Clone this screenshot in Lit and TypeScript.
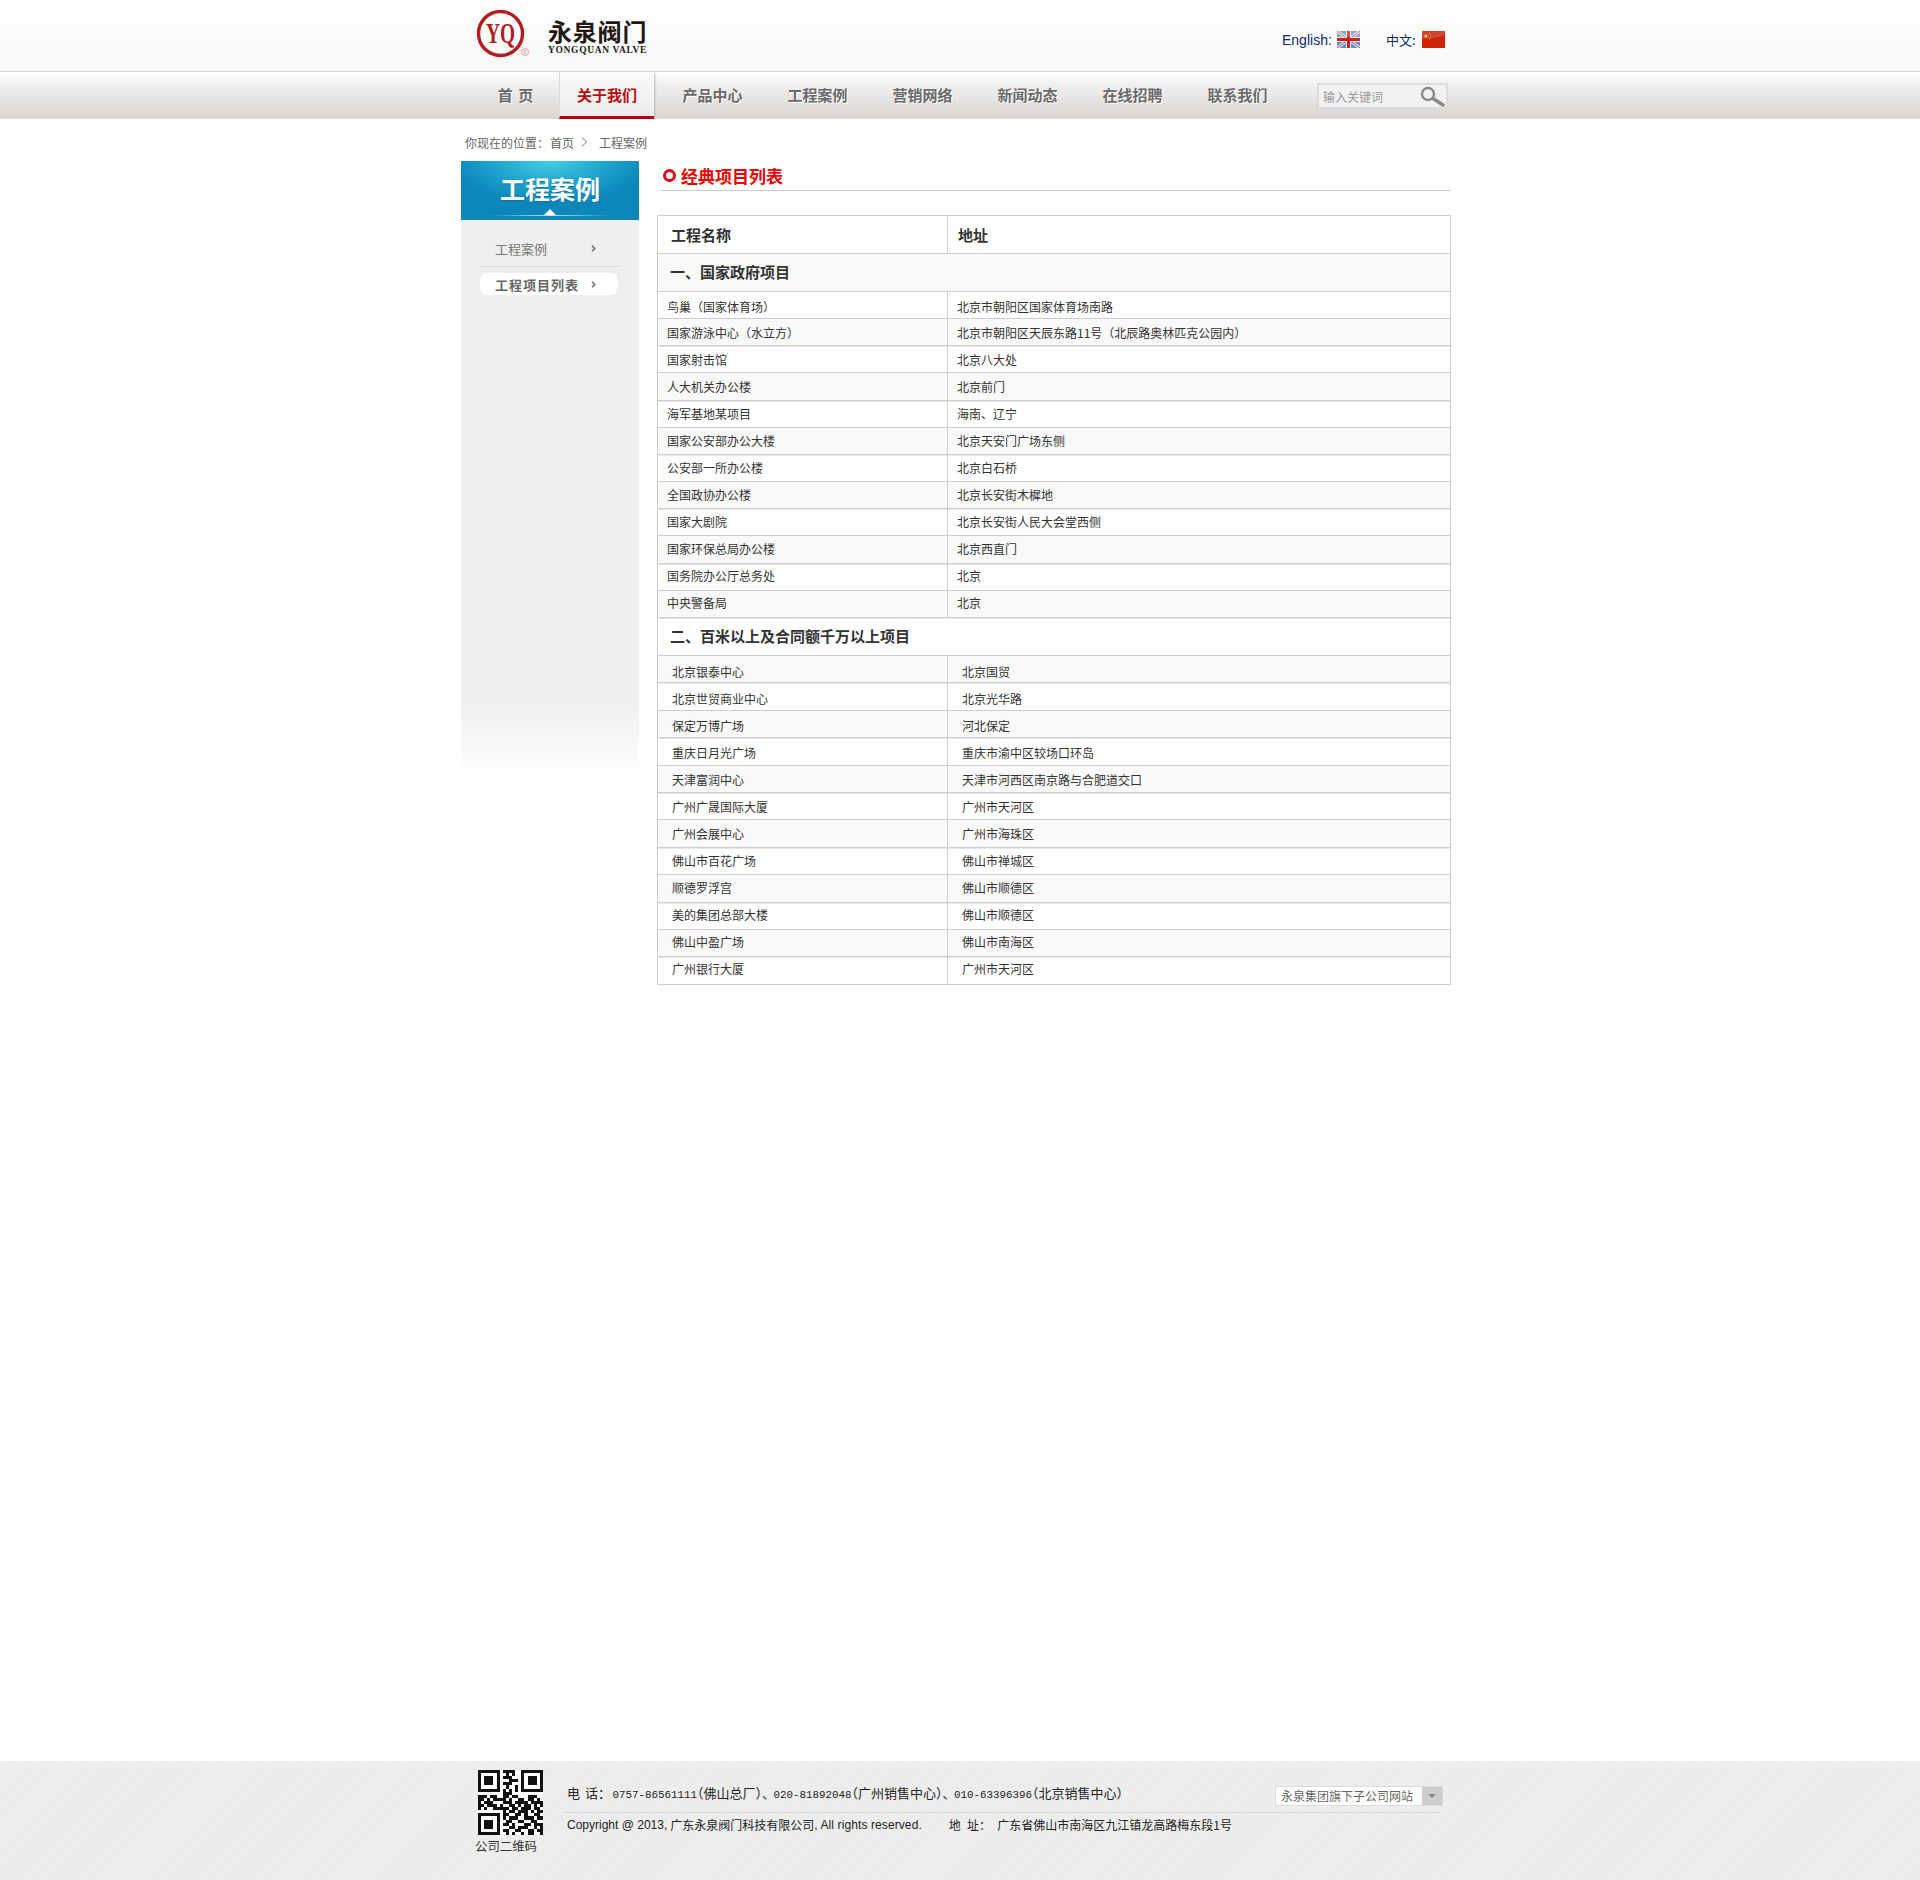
import { LitElement, html, css, svg } from "lit";
import { customElement } from "lit/decorators.js";

const S1 = [
  ["鸟巢（国家体育场）", "北京市朝阳区国家体育场南路"],
  ["国家游泳中心（水立方）", "北京市朝阳区天辰东路11号（北辰路奥林匹克公园内）"],
  ["国家射击馆", "北京八大处"],
  ["人大机关办公楼", "北京前门"],
  ["海军基地某项目", "海南、辽宁"],
  ["国家公安部办公大楼", "北京天安门广场东侧"],
  ["公安部一所办公楼", "北京白石桥"],
  ["全国政协办公楼", "北京长安街木樨地"],
  ["国家大剧院", "北京长安街人民大会堂西侧"],
  ["国家环保总局办公楼", "北京西直门"],
  ["国务院办公厅总务处", "北京"],
  ["中央警备局", "北京"],
];
const S2 = [
  ["北京银泰中心", "北京国贸"],
  ["北京世贸商业中心", "北京光华路"],
  ["保定万博广场", "河北保定"],
  ["重庆日月光广场", "重庆市渝中区较场口环岛"],
  ["天津富润中心", "天津市河西区南京路与合肥道交口"],
  ["广州广晟国际大厦", "广州市天河区"],
  ["广州会展中心", "广州市海珠区"],
  ["佛山市百花广场", "佛山市禅城区"],
  ["顺德罗浮宫", "佛山市顺德区"],
  ["美的集团总部大楼", "佛山市顺德区"],
  ["佛山中盈广场", "佛山市南海区"],
  ["广州银行大厦", "广州市天河区"],
];
const NAV = ["产品中心", "工程案例", "营销网络", "新闻动态", "在线招聘", "联系我们"];

const QR = [
  "111111101111001111111",
  "100000100101001000001",
  "101110101110001011101",
  "101110100011101011101",
  "101110101110001011101",
  "100000100100101000001",
  "111111101010101111111",
  "000000001110000000000",
  "111011001101100011100",
  "110101111010011011010",
  "101110001110111101111",
  "110111010011010110101",
  "101001111101101110110",
  "000000001011011101011",
  "111111101100110100110",
  "100000101011100111011",
  "101110100110011001100",
  "101110101101000110111",
  "101110100011011100101",
  "100000101100110011011",
  "111111100101001011001",
];

const qr = () => html`<svg class="qr" viewBox="0 0 21 21" shape-rendering="crispEdges">
  <rect width="21" height="21" fill="#fff"></rect>
  ${QR.map((r, y) => [...r].map((c, x) => c === "1" ? svg`<rect x=${x} y=${y} width="1" height="1" fill="#111"></rect>` : null))}
</svg>`;

const ukFlag = html`<svg class="flag" viewBox="0 0 23 17">
  <rect width="23" height="17" fill="#4d94dd"></rect>
  <path d="M0 0L23 17M23 0L0 17" stroke="#f3e4e4" stroke-width="3"></path>
  <path d="M0 0L23 17M23 0L0 17" stroke="#d4453f" stroke-width="1"></path>
  <path d="M11.5 0V17M0 8.5H23" stroke="#f6eeee" stroke-width="5"></path>
  <path d="M11.5 0V17M0 8.5H23" stroke="#cf1f1a" stroke-width="3"></path>
  <rect width="23" height="6" fill="#fff" opacity=".22"></rect>
</svg>`;
const cnFlag = html`<svg class="flag" viewBox="0 0 23 17">
  <rect width="23" height="17" fill="#cc2208"></rect>
  <path d="M0 0H23V4C15 7 7 8 0 8Z" fill="#fff" opacity=".16"></path>
  <circle cx="4" cy="5" r="1.6" fill="#f3d25c"></circle>
  <circle cx="7.5" cy="2.4" r=".5" fill="#f3d25c"></circle>
  <circle cx="8.6" cy="4.2" r=".5" fill="#f3d25c"></circle>
  <circle cx="8.6" cy="6.2" r=".5" fill="#f3d25c"></circle>
  <circle cx="7.5" cy="8" r=".5" fill="#f3d25c"></circle>
</svg>`;
const chevron = html`<svg class="chev" viewBox="0 0 5 7"><path d="M1 .8L3.8 3.5L1 6.2" fill="none" stroke="#666" stroke-width="1.4"></path></svg>`;

@customElement("app-root")
export class AppRoot extends LitElement {
  static styles = css`
    :host {
      display: block;
      font-family: "Noto Sans CJK SC", "Liberation Sans", sans-serif;
      font-size: 12px;
      color: #333;
      background: #fff;
    }
    * { box-sizing: border-box; }
    .page { display: flex; flex-direction: column; min-height: 1880px; }
    .wrap { width: 990px; margin: 0 0 0 461px; }

    .top { height: 72px; background: linear-gradient(#fff, #f8f8f8); border-bottom: 1px solid #d2d2d2; }
    .top .wrap { display: flex; height: 71px; align-items: flex-start; padding: 0 6px 0 15px; }
    .logo { width: 54px; height: 50px; margin-top: 9px; flex: none; }
    .brand { margin: 19px 0 0 18px; display: flex; flex-direction: column; width: 100px; color: #231815; }
    .brand b { font-size: 24px; line-height: 24px; letter-spacing: .8px; white-space: nowrap; }
    .brand span { font-family: "Liberation Serif", serif; font-weight: 700; font-size: 9.5px; line-height: 10px; letter-spacing: .66px; white-space: nowrap; margin-top: 2px; }
    .lang { margin: 31px 0 0 auto; display: flex; align-items: center; height: 17px; color: #0b2c5e; }
    .lang .en { font-family: "Liberation Sans", sans-serif; font-size: 14px; width: 55px; white-space: nowrap; }
    .lang .zh { font-size: 13px; width: 36px; margin-left: 26px; white-space: nowrap; }
    .flag { width: 23px; height: 17px; display: block; }

    .nav { height: 47px; background: linear-gradient(#fefefe, #f0efee 30%, #d8d5d2); }
    .nav .wrap { display: flex; height: 47px; align-items: stretch; padding-right: 3px; }
    .item {
      width: 105px; display: flex; align-items: center; justify-content: center;
      font-size: 15px; font-weight: 700; color: #6a6a6a; text-shadow: 1px 1px 0 #fff; white-space: nowrap; padding-bottom: 3px;
    }
    .item.first { width: 94px; padding-left: 15px; word-spacing: 2px; }
    .item.active {
      width: 95px; margin: 0 6px 0 4px; color: #b80d12; text-shadow: none;
      background: linear-gradient(#fbfbfb, #ececeb);
      border-bottom: 3px solid #b8000f; border-left: 1px solid #dcdcdc; padding-bottom: 0;
      box-shadow: 2px 0 2px -1px #bbb;
    }
    .search {
      margin: 11px 0 10px auto; width: 131px; height: 26px; border: 2px solid #dedcda; background: #f2f2f2;
      display: flex; align-items: center; justify-content: space-between; padding: 0 1px 0 4px; color: #999; font-size: 12px;
    }
    .search svg { width: 26px; height: 21px; display: block; }

    .crumb { height: 42px; display: flex; align-items: center; padding: 10px 0 6px 4px; color: #666; white-space: nowrap; }
    .crumb .sep { width: 7px; height: 10px; margin: 0 11px 0 7px; display: block; }
    .crumb .home { margin-left: 1px; }

    .body { display: grid; grid-template-columns: 178px 794px; column-gap: 18px; align-items: start; }

    .side { min-height: 619px; background: linear-gradient(#efefef 0, #efefef 86.5%, #fff 100%); }
    .side-head {
      position: relative; height: 59px;
      background: radial-gradient(ellipse 55% 70% at 50% 0, #44cde3 0, #1fa6cf 55%, #0d87bb 100%);
      display: flex; align-items: center; justify-content: center; padding-bottom: 6px;
      color: #fff; font-size: 25px; font-weight: 700; text-shadow: 0 1px 1px #0a6f9e;
    }
    .side-head::before {
      content: ""; position: absolute; left: 28px; right: 28px; bottom: 4px; height: 1px;
      background: linear-gradient(90deg, transparent, #b5e8f3 50%, transparent);
    }
    .side-head::after {
      content: ""; position: absolute; left: 83px; bottom: 5px; width: 0; height: 0;
      border: 6px solid transparent; border-top: 0; border-bottom: 6px solid #fff;
    }
    .menu { padding: 17px 18px 0 19px; color: #777; }
    .mi { display: flex; align-items: center; justify-content: space-between; height: 30px; padding: 0 25px 6px 15px; border-bottom: 1px solid #dcdcdc; font-size: 13px; }
    .mi.on {
      height: 22px; width: 138px; margin-top: 6px; padding: 0 22px 0 15px; border: 0; background: #fff; border-radius: 8px;
      font-weight: 700; color: #666; letter-spacing: 1px;
    }
    .chev { width: 5px; height: 7px; display: block; flex: none; }

    .title { height: 30px; margin-left: 3px; border-bottom: 1px solid #cfcfcf; display: flex; align-items: center; padding: 0 0 0 3px; color: #ee0000; font-size: 17px; font-weight: 700; }
    .dot { width: 13px; height: 13px; border: 3px solid #e60012; border-radius: 50%; margin-right: 5px; flex: none; }

    .table { margin-top: 24px; border: 1px solid #cfcfcf; border-bottom: 0; color: #333; }
    .row { display: grid; grid-template-columns: 290px 1fr; border-bottom: 1px solid #cfcfcf; white-space: nowrap; }
    .row > div:first-child { border-right: 1px solid #cfcfcf; }
    .hd { height: 38px; font-size: 15px; font-weight: 700; }
    .hd > div { display: flex; align-items: center; }
    .hd > div:first-child { padding-left: 13px; }
    .hd > div:last-child { padding-left: 10px; }
    .sec { height: 38px; display: flex; align-items: center; border-bottom: 1px solid #cfcfcf; padding: 0 0 2px 12px; font-size: 15px; font-weight: 700; }
    .sec.a { background: #f9f9f9; }
    .d1, .d2 { line-height: 20px; box-shadow: 0 1px 0 #e9e9e9; }
    .d1 { height: 27.17px; }
    .d2 { height: 27.42px; }
    .d1 > div, .d2 > div { padding-top: var(--p); }
    .d1 > div { padding-left: 9px; }
    .d2 > div { padding-left: 14px; }
    .even { background: #f9f9f9; }
    .row:last-child { box-shadow: none; }

    .foot {
      margin-top: auto; height: 119px;
      background: repeating-linear-gradient(135deg, #eeeeee 0 2px, #ececec 2px 4px);
    }
    .foot .wrap { display: flex; padding: 9px 0 0 15px; height: 119px; }
    .qrcol { width: 88px; flex: none; }
    .qr { width: 65px; height: 65px; margin-left: 2px; display: block; }
    .qrcol span { display: block; line-height: 16px; margin: 3px 0 0 -1px; color: #333; white-space: nowrap; font-size: 12.4px; }
    .fr { width: 876px; margin-top: 16px; color: #222; }
    .l1 { display: flex; align-items: center; height: 27px; padding: 0 0 6px 3px; border-bottom: 1px solid #d8d8d8; font-size: 13px; white-space: nowrap; }
    .txt { padding-bottom: 7px; font-feature-settings: "halt"; }
    .num { font-family: "Liberation Mono", monospace; font-size: 10.83px; }
    .lab { display: inline-block; width: 45.5px; word-spacing: 2px; }
    .g { margin-right: 5px; }
    .sel {
      margin-left: auto; margin-right: -3px; width: 168px; height: 20px; border: 1px solid #dcdcdc; background: #fff; display: flex; align-items: center;
      padding: 0 0 2px 5px; color: #666; font-size: 12px;
    }
    .sel i { margin: 2px 0 0 auto; width: 20px; height: 18px; background: #cdcdcd; display: flex; align-items: center; justify-content: center; }
    .sel i::after { content: ""; border: 4px solid transparent; border-top: 4px solid #888; border-bottom: 0; }
    .l2 { display: flex; align-items: center; padding: 3px 0 0 3px; white-space: nowrap; font-size: 12px; }
    .l2 .en { font-family: "Liberation Sans", sans-serif; }
    .l2 .c1 { margin-right: 3px; }
    .l2 .c2 { letter-spacing: .1px; }
    .l2 .addr { margin-left: 27px; word-spacing: 3.5px; }
  `;

  render() {
    return html`<div class="page">
      <div class="top"><div class="wrap">
        <svg class="logo" viewBox="0 0 54 50">
          <circle cx="24.5" cy="24.5" r="22" fill="none" stroke="#b51c1f" stroke-width="3.4"></circle>
          <text x="24.5" y="34" text-anchor="middle" font-family="Liberation Serif, serif" font-weight="700" font-size="30" fill="#b51c1f" textLength="29" lengthAdjust="spacingAndGlyphs">YQ</text>
          <circle cx="49" cy="43" r="3.5" fill="none" stroke="#dd8a8c" stroke-width=".8"></circle>
          <text x="49" y="45" text-anchor="middle" font-family="Liberation Sans, sans-serif" font-size="5" fill="#dd8a8c">R</text>
        </svg>
        <div class="brand"><b>永泉阀门</b><span>YONGQUAN VALVE</span></div>
        <div class="lang"><span class="en">English:</span>${ukFlag}<span class="zh">中文:</span>${cnFlag}</div>
      </div></div>

      <div class="nav"><div class="wrap">
        <div class="item first">首 页</div>
        <div class="item active">关于我们</div>
        ${NAV.map((n) => html`<div class="item">${n}</div>`)}
        <div class="search"><span>输入关键词</span>
          <svg viewBox="0 0 26 21"><circle cx="9" cy="8" r="6" fill="none" stroke="#888" stroke-width="2.4"></circle><path d="M14 12.5L24 19" stroke="#888" stroke-width="3.4" stroke-linecap="round"></path></svg>
        </div>
      </div></div>

      <div class="wrap">
        <div class="crumb">你现在的位置：<span class="home">首页</span>
          <svg class="sep" viewBox="0 0 7 10"><path d="M1 .5L5.5 5L1 9.5" fill="none" stroke="#777"></path></svg>
          工程案例</div>
        <div class="body">
          <div class="side">
            <div class="side-head">工程案例</div>
            <div class="menu">
              <div class="mi"><span>工程案例</span>${chevron}</div>
              <div class="mi on"><span>工程项目列表</span>${chevron}</div>
            </div>
          </div>
          <div class="main">
            <div class="title"><span class="dot"></span>经典项目列表</div>
            <div class="table">
              <div class="row hd"><div>工程名称</div><div>地址</div></div>
              <div class="sec a">一、国家政府项目</div>
              ${S1.map((r, i) => html`<div class="row d1 ${i % 2 ? "even" : ""}" style="--p:${(4.5 - (2 * i) / 11).toFixed(2)}px"><div>${r[0]}</div><div>${r[1]}</div></div>`)}
              <div class="sec">二、百米以上及合同额千万以上项目</div>
              ${S2.map((r, i) => html`<div class="row d2 ${i % 2 ? "" : "even"}" style="--p:${(6.5 - 0.46 * i).toFixed(2)}px"><div>${r[0]}</div><div>${r[1]}</div></div>`)}
            </div>
          </div>
        </div>
      </div>

      <div class="foot"><div class="wrap">
        <div class="qrcol">${qr()}<span>公司二维码</span></div>
        <div class="fr">
          <div class="l1"><span class="txt"><span class="lab">电 话：</span><span class="num">0757-86561111</span>（佛山总厂）<span class="g">、</span><span class="num">020-81892048</span>（广州销售中心）<span class="g">、</span><span class="num">010-63396396</span>（北京销售中心）</span>
            <div class="sel">永泉集团旗下子公司网站<i></i></div>
          </div>
          <div class="l2"><span class="en c1">Copyright @ 2013, </span>广东永泉阀门科技有限公司<span class="en c2">, All rights reserved.</span><span class="addr">地 址： 广东省佛山市南海区九江镇龙高路梅东段1号</span></div>
        </div>
      </div></div>
    </div>`;
  }
}
